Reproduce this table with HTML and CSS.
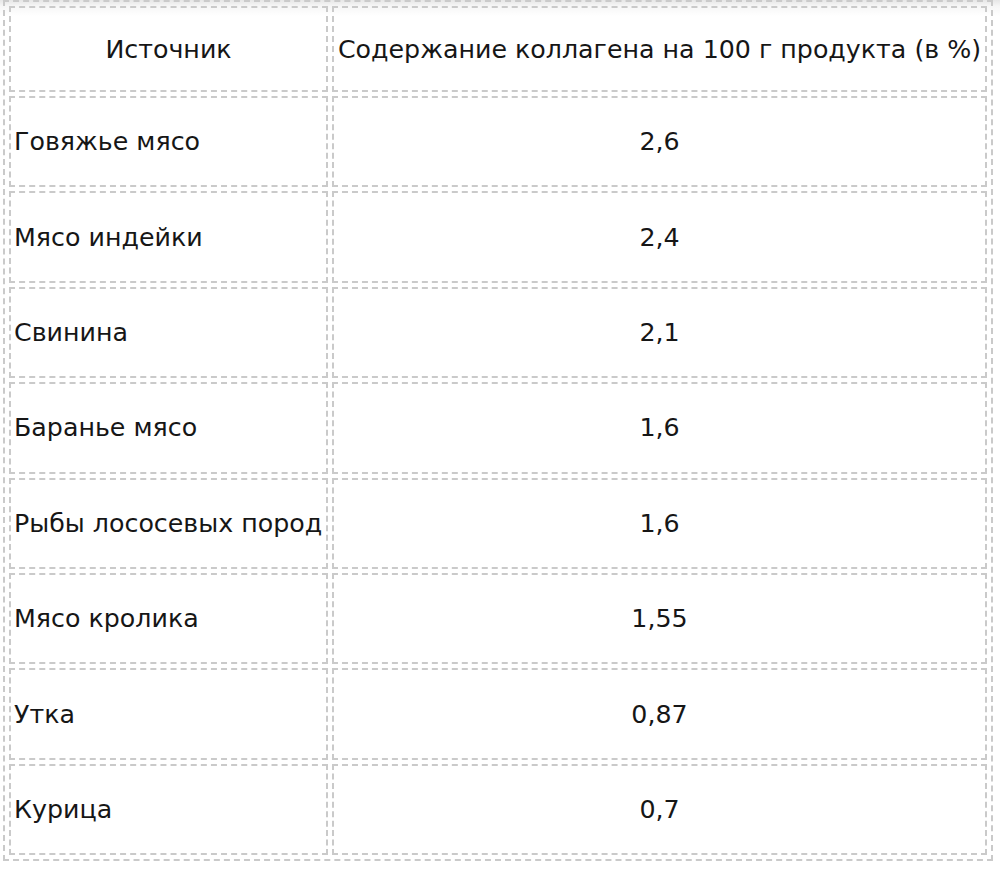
FILE: index.html
```html
<!DOCTYPE html>
<html lang="ru">
<head>
<meta charset="utf-8">
<link rel="stylesheet" href="styles.css">
</head>
<body>
<table class="collagen">
  <tr class="head">
    <td class="name center">Источник</td>
    <td class="val">Содержание коллагена на 100 г продукта (в %)</td>
  </tr>
  <tr><td class="name">Говяжье мясо</td><td class="val">2,6</td></tr>
  <tr><td class="name">Мясо индейки</td><td class="val">2,4</td></tr>
  <tr><td class="name">Свинина</td><td class="val">2,1</td></tr>
  <tr><td class="name">Баранье мясо</td><td class="val">1,6</td></tr>
  <tr><td class="name">Рыбы лососевых пород</td><td class="val">1,6</td></tr>
  <tr><td class="name">Мясо кролика</td><td class="val">1,55</td></tr>
  <tr><td class="name">Утка</td><td class="val">0,87</td></tr>
  <tr><td class="name">Курица</td><td class="val">0,7</td></tr>
</table>
</body>
</html>
```
FILE: styles.css
```css
html, body {
  margin: 0;
  padding: 0;
}
body {
  width: 1000px;
  height: 872px;
  background: linear-gradient(#e6e6e6 0, #f6f6f6 6px, #ffffff 16px) no-repeat;
  font-family: "DejaVu Sans", Verdana, sans-serif;
  font-size: 25.3px;
  color: #161616;
}
.collagen {
  margin-left: 3px;
  width: 990px;
  border: 2px dashed #cacaca;
  border-collapse: separate;
  border-spacing: 4px;
  table-layout: fixed;
}
.collagen td {
  box-sizing: border-box;
  border: 2px dashed #cacaca;
  height: 91.4px;
  padding: 0 3px;
  vertical-align: middle;
  white-space: nowrap;
}
.collagen .head td {
  height: 86px;
}
.collagen .name {
  width: 319px;
  text-align: left;
}
.collagen .name.center {
  text-align: center;
}
.collagen .val {
  text-align: center;
}
```
